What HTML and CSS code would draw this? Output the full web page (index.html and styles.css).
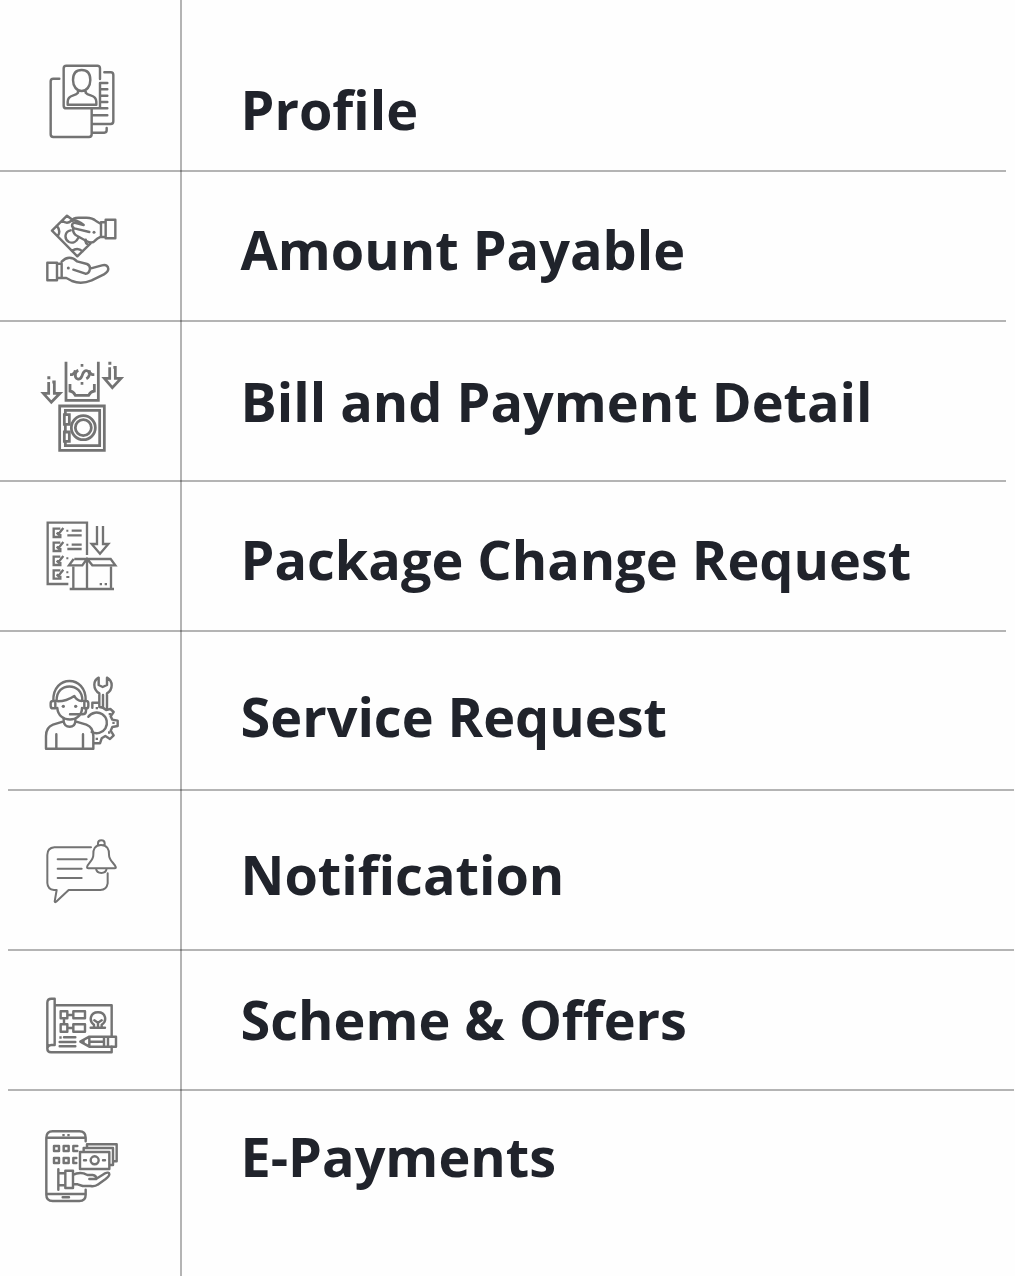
FILE: index.html
```html
<!DOCTYPE html>
<html lang="en">
<head>
<meta charset="utf-8">
<title>Menu</title>
<link rel="stylesheet" href="styles.css">
</head>
<body>
<main class="menu">
  <section class="row profile">
    <svg class="icon" viewBox="0 0 276 276">
      <path d="M70 68H52Q44 68 44 76V235Q44 243 52 243H159Q167 243 167 235V159M192 69V37Q192 29 184 29H91Q83 29 83 37V149Q83 157 91 157H214M192 81V157M192 81H214M192 100H214M192 119H214M192 138H214M167 178H214M205 49H224Q232 49 232 57V196Q232 204 224 204H167M167 230H205Q212 230 212 223V216"/>
      <path d="M137 42C119 42 111 54 111 72C111 91 122 105 137 105C152 105 163 91 163 72C163 54 155 42 137 42ZM126 103V110Q122 115 112 118Q95 123 95 137V146H181V137Q181 123 164 118Q153 115 149 110V103"/>
    </svg>
    <h2 class="label">Profile</h2>
  </section>
  <hr class="rule">
  <section class="row payable">
    <svg class="icon" viewBox="0 0 276 276">
      <path d="M111 49L93 35L48 80L124 157L163 119M78 50Q93 62 105 51M62 65Q76 81 65 97M108 141Q124 129 140 142M149 107Q145 115 157 123M104 79C86 82 83 105 99 114C111 119 122 112 127 101"/>
      <path d="M160 84L115 73C104 68 107 53 120 57L143 63Q126 48 108 50Q110 41 128 41H151Q170 41 180 51L195 60M195 98Q183 103 177 110Q168 121 151 111L124 96Q111 90 111 74M195 55H209V99H195ZM209 47H238V103H209Z"/>
      <path d="M34 176H63V229H34ZM63 179H77V222H63ZM77 173Q88 161 100 161Q113 161 123 172L153 180Q163 184 162 195Q159 210 148 209L112 197M162 194L198 184Q216 180 217 195Q216 205 204 211L167 229Q136 242 108 231L91 222H77"/>
      <circle class="dot" cx="97" cy="192" r="4.5"/><circle class="dot" cx="174" cy="85" r="4.5"/>
    </svg>
    <h2 class="label">Amount Payable</h2>
  </section>
  <hr class="rule">
  <section class="row bill">
    <svg class="icon tall" viewBox="0 0 276 312">
      <g class="heavy">
      <path d="M90 23V139H187V23M102 62H108Q116 60 118 49M159 49Q161 60 169 62H175M102 90V111Q112 112 118 124H158Q164 112 175 111V90M118 61C117 77 131 80 137 68L141 58C147 45 161 49 160 62Q159 70 151 74M118 61Q119 52 127 49"/>
      <path d="M71 156H205V289H71ZM88 182V169H191V275H88V262M88 209V235M85 182H100V211H85ZM85 234H100V262H85Z"/>
      <circle cx="142" cy="221" r="36"/><circle cx="142" cy="221" r="24"/>
      <path d="M38 84V118H22L46 145L72 118H55V84H49M221 40V73H205L229 101L255 73H238V40H232"/></g>
      <path class="dot" d="M134 30h8v8h-8ZM134 84h8v8h-8ZM34 67h9v9h-9ZM217 23h9v9h-9Z"/>
    </svg>
    <h2 class="label">Bill and Payment Detail</h2>
  </section>
  <hr class="rule">
  <section class="row package">
    <svg class="icon" viewBox="0 0 276 276">
      <g class="square"><path d="M97 222H35V38H153V135M101 237H234M112 170V237M225 170V237M153 150V237M115 147H224L238 166H169L153 146L139 166H99L113 147M183 48V102H167L192 131L217 102H201V48"/>
      <path d="M73 56H53V81H73V72M73 98H53V123H73V114M73 140H53V165H73V156M73 181H53V206H73V197M62 68L67 73L82 54M62 110L67 115L82 96M62 152L67 157L82 138M62 193L67 198L82 179M107 62H137M94 76H137M107 104H137M94 117H137"/></g>
      <path class="dot" d="M91 59h6v6h-6ZM91 101h6v6h-6ZM91 142h6v6h-6ZM91 184h6v6h-6ZM91 198h9v6h-9ZM191 219h7v7h-7ZM206 219h7v7h-7Z"/>
    </svg>
    <h2 class="label">Package Change Request</h2>
  </section>
  <hr class="rule">
  <section class="row service">
    <svg class="icon" viewBox="0 0 276 276">
      <path d="M58 99H51Q44 99 44 106V113Q44 121 51 121H58ZM145 99H151Q157 99 157 106V113Q157 121 151 121H145ZM52 98C50 19 151 19 149 98M62 98C60 41 140 41 139 98M66 100Q91 100 115 84Q122 98 137 99M64 120C66 166 138 166 138 120M150 122V128Q150 139 139 139H102"/>
      <path d="M83 153V160L51 170Q30 178 30 204V242H172V204Q172 178 151 170L118 160V153M83 160Q85 176 101 176Q117 176 118 160M61 199V242M141 199V242"/>
      <path d="M157 146A31 31 0 1 1 167 192"/>
      <path d="M169 119V104H190M190 117V76Q175 67 175 50Q175 36 188 29V51L200 57L213 51V29Q227 37 227 52Q227 68 213 76V119M201 81V116M190 117Q202 117 210 126L223 123L233 132L224 145L229 155L245 158V174L229 177L224 188L233 202L222 213L208 204L197 211L192 226H174"/>
      <circle class="dot" cx="82" cy="115" r="5"/><circle class="dot" cx="119" cy="115" r="5"/>
      <path class="dot" d="M179 117h7v7h-7ZM218 135h7v7h-7ZM229 161h7v7h-7ZM216 190h7v7h-7ZM179 209h7v7h-7Z"/>
    </svg>
    <h2 class="label">Service Request</h2>
  </section>
  <hr class="rule shifted">
  <section class="row notification">
    <svg class="icon" viewBox="0 0 276 276">
      <g class="light"><path d="M165 58H55Q34 60 34 81V165Q35 184 54 186H62L56 220Q57 225 62 220L98 186H193Q212 185 215 166V136M65 94H152M65 122H137M65 150H137"/>
      <path d="M195 51C176 51 171 65 172 80C173 98 155 105 153 118Q153 121 157 121H236Q241 121 239 117C235 105 219 98 219 80C220 65 214 51 195 51ZM186 51V46Q186 37 196 37Q206 37 206 46V51M180 122Q182 135 196 135Q210 135 212 122"/></g>
    </svg>
    <h2 class="label">Notification</h2>
  </section>
  <hr class="rule shifted">
  <section class="row scheme">
    <svg class="icon" viewBox="0 0 276 276">
      <path d="M58 76H227V169M227 200V217H45Q34 217 34 206V68Q34 56 46 56H56V195H46Q34 196 34 207M74 94H94V115H74ZM112 94H147V115H112ZM74 133H94V155H74ZM112 133H147V155H112ZM94 105H112M84 115V133M94 144H112M84 172H118M71 186H118M71 199H118M164 143H207M174 141V134C158 123 162 97 186 97C210 97 214 123 197 134V141M186 141V128L175 121M186 128L197 121"/>
      <path d="M133 185L160 170H240V200H160ZM160 170V200M160 185H204M204 170V200M216 170V200"/>
      <path class="dot" d="M133 185L146 178V192ZM70 169h7v7h-7Z"/>
    </svg>
    <h2 class="label">Scheme &amp; Offers</h2>
  </section>
  <hr class="rule shifted">
  <section class="row epay">
    <svg class="icon" viewBox="0 0 276 276">
      <path d="M149 64V53Q149 34 130 34H50Q31 34 31 53V224Q31 243 50 243H130Q149 243 149 224V209M31 53H149M31 222H149M80 232H99M54 78H69V93H54ZM83 78H98V93H83ZM124 78H112V93H124M54 114H69V129H54ZM83 114H98V129H83ZM121 114H112V129H121"/>
      <path d="M132 96H220V147H132ZM143 95V84H231V135H221M153 83V73H242V124H232M144 121H150M201 121H207"/>
      <circle cx="176" cy="121" r="12"/>
      <path d="M67 148V209M67 160H88M67 196H88M88 152H111V204H88ZM111 165Q124 157 143 160L154 165H170Q181 166 181 177H160M181 176L205 161Q220 154 220 163Q220 169 208 178L185 194Q178 200 163 198H140L125 193H111"/>
      <path class="dot" d="M79 42h7v7h-7ZM94 42h7v7h-7Z"/>
    </svg>
    <h2 class="label">E-Payments</h2>
  </section>
</main>
</body>
</html>
```
FILE: styles.css
```css
* { box-sizing: border-box; }
body { margin: 0; background: #fefefe; }
.menu {
  position: relative;
  width: 1015px;
  height: 1276px;
  overflow: hidden;
}
/* divider crossing every row */
.menu::before {
  content: "";
  position: absolute;
  left: 180px;
  top: 0;
  width: 2px;
  height: 100%;
  background: rgba(0, 0, 0, 0.29);
}
.row {
  display: flex;
  align-items: flex-start;
  padding-left: 36px;
  height: 148px;
}
.rule {
  width: 1006.4px;
  height: 2px;
  margin: 0;
  border: 0;
  background: rgba(0, 0, 0, 0.29);
}
.rule.shifted { margin-left: 8px; }
.icon {
  flex: none;
  width: 92px;
  height: 92px;
  margin-top: 32px;
  fill: none;
  stroke: #737373;
  stroke-width: 7.3;
  stroke-linecap: round;
  stroke-linejoin: round;
}
.icon.tall { height: 104px; }
.heavy { stroke-width: 8.3; stroke-linecap: butt; stroke-linejoin: miter; }
.light { stroke-width: 6; }
.square { stroke-width: 7; stroke-linecap: butt; stroke-linejoin: miter; }
.dot { fill: #737373; stroke: none; }
.label {
  margin: 48px 0 0 112.5px;
  font: 700 54px/60px "Open Sans", "Noto Sans", sans-serif;
  color: #20232b;
  white-space: nowrap;
}
.profile { height: 170px; }
.profile .icon { margin-top: 56px; }
.profile .label { margin-top: 79px; }
.payable .label { margin-top: 47px; }
.bill { height: 158px; }
.bill .label { margin-top: 49px; }
.package .icon { margin-top: 28px; }
.package .label { margin-top: 47px; }
.service { height: 157px; }
.service .icon { margin-top: 36px; }
.service .label { margin-top: 54px; }
.notification { height: 158px; }
.notification .icon { margin-top: 37px; }
.notification .label { margin-top: 53px; }
.scheme { height: 138px; }
.scheme .icon, .epay .icon { margin-top: 29px; }
.scheme .label { margin-top: 38px; }
.epay { height: 185px; }
.epay .label { margin-top: 35px; }
```
